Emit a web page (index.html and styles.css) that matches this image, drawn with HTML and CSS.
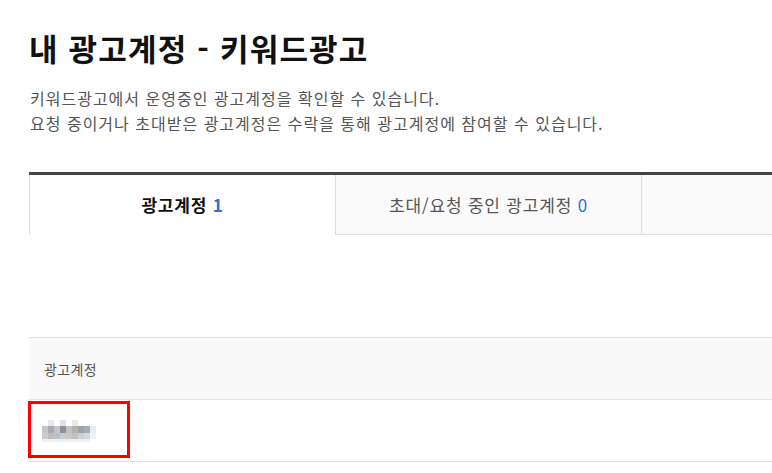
FILE: index.html
```html
<!DOCTYPE html>
<html lang="ko">
<head>
<meta charset="utf-8">
<title>내 광고계정 - 키워드광고</title>
<link rel="stylesheet" href="styles.css">
</head>
<body>
<div class="page">
  <h1 class="title">내 광고계정 - 키워드광고</h1>
  <p class="desc">키워드광고에서 운영중인 광고계정을 확인할 수 있습니다.<br>요청 중이거나 초대받은 광고계정은 수락을 통해 광고계정에 참여할 수 있습니다.</p>

  <div class="tabs">
    <div class="tab active"><span class="label">광고계정 <span class="count">1</span></span></div>
    <div class="tab"><span class="label">초대/요청 중인 광고계정 <span class="count">0</span></span></div>
    <div class="tab"></div>
  </div>

  <div class="table">
    <div class="thead">광고계정</div>
    <div class="row">
      <div class="cell">
        <svg class="masked" width="54" height="22" viewBox="0 0 54 22" aria-label="가려진 계정명">
          <rect x="6" y="0" width="6" height="6" fill="#e8e8e8"/>
          <rect x="18" y="0" width="6" height="6" fill="#e3e3e3"/>
          <rect x="30" y="0" width="6" height="6" fill="#e8e8e8"/>
          <rect x="0" y="6" width="6" height="7" fill="#c8c4c2"/>
          <rect x="6" y="6" width="6" height="7" fill="#a9a9ad"/>
          <rect x="12" y="6" width="6" height="7" fill="#c2c4c8"/>
          <rect x="18" y="6" width="6" height="7" fill="#8c9099"/>
          <rect x="24" y="6" width="6" height="7" fill="#c0c4c8"/>
          <rect x="30" y="6" width="6" height="7" fill="#b9b0aa"/>
          <rect x="36" y="6" width="6" height="7" fill="#9da0a6"/>
          <rect x="42" y="6" width="6" height="7" fill="#a8abb0"/>
          <rect x="48" y="6" width="6" height="7" fill="#e3eef8"/>
          <rect x="0" y="13" width="6" height="6" fill="#cdcac8"/>
          <rect x="6" y="13" width="6" height="6" fill="#c0bcbc"/>
          <rect x="12" y="13" width="6" height="6" fill="#b8c2ca"/>
          <rect x="18" y="13" width="6" height="6" fill="#c8cdd3"/>
          <rect x="24" y="13" width="6" height="6" fill="#c8c8c8"/>
          <rect x="30" y="13" width="6" height="6" fill="#c0c0c4"/>
          <rect x="36" y="13" width="6" height="6" fill="#cfd1d4"/>
          <rect x="42" y="13" width="6" height="6" fill="#d6d8dc"/>
          <rect x="48" y="13" width="6" height="6" fill="#eaf3fb"/>
          <rect x="0" y="19" width="48" height="3" fill="#f0f0f0"/>
        </svg>
        <span class="highlight"></span>
      </div>
    </div>
  </div>
</div>
</body>
</html>
```
FILE: styles.css
```css
html, body {
  margin: 0;
  padding: 0;
  background: #fff;
  overflow: hidden;
}
body {
  font-family: "Noto Sans CJK KR", "Noto Sans", sans-serif;
  color: #222;
}
.page {
  padding-left: 29px;
  width: 918px;
}
.title {
  margin: 0;
  padding-top: 26px;
  font-size: 31px;
  line-height: 44px;
  font-weight: 700;
  color: #111;
  letter-spacing: 1.2px;
}
.desc {
  margin: 16px 0 0 1px;
  font-size: 16px;
  line-height: 25px;
  color: #555;
  letter-spacing: 1px;
}
.tabs {
  display: flex;
  margin-top: 36px;
  border-top: 3px solid #444;
}
.tab {
  flex: 0 0 306px;
  box-sizing: border-box;
  height: 60px;
  display: flex;
  align-items: center;
  justify-content: center;
  border-left: 1px solid #ddd;
  border-bottom: 1px solid #ddd;
  background: #fafafa;
  font-size: 17px;
  letter-spacing: 0.8px;
  color: #555;
}
.tab.active {
  background: #fff;
  border-bottom-color: transparent;
  font-weight: 700;
  color: #111;
}
.label {
  white-space: pre;
}
.count {
  color: #2f6fd8;
}
.table {
  margin-top: 102px;
  border-top: 1px solid #ddd;
}
.thead {
  height: 62px;
  box-sizing: border-box;
  background: #f9f9f9;
  border-bottom: 1px solid #e5e5e5;
  display: flex;
  align-items: center;
  padding-left: 15px;
  font-size: 14px;
  letter-spacing: 0.4px;
  color: #555;
}
.row {
  border-bottom: 1px solid #ddd;
}
.cell {
  position: relative;
  height: 61px;
  display: flex;
  align-items: center;
  padding-left: 13px;
}
.masked {
  display: block;
}
.highlight {
  position: absolute;
  left: -1px;
  top: 1px;
  width: 102px;
  height: 57px;
  box-sizing: border-box;
  border: 3px solid #ff0000;
}
```
